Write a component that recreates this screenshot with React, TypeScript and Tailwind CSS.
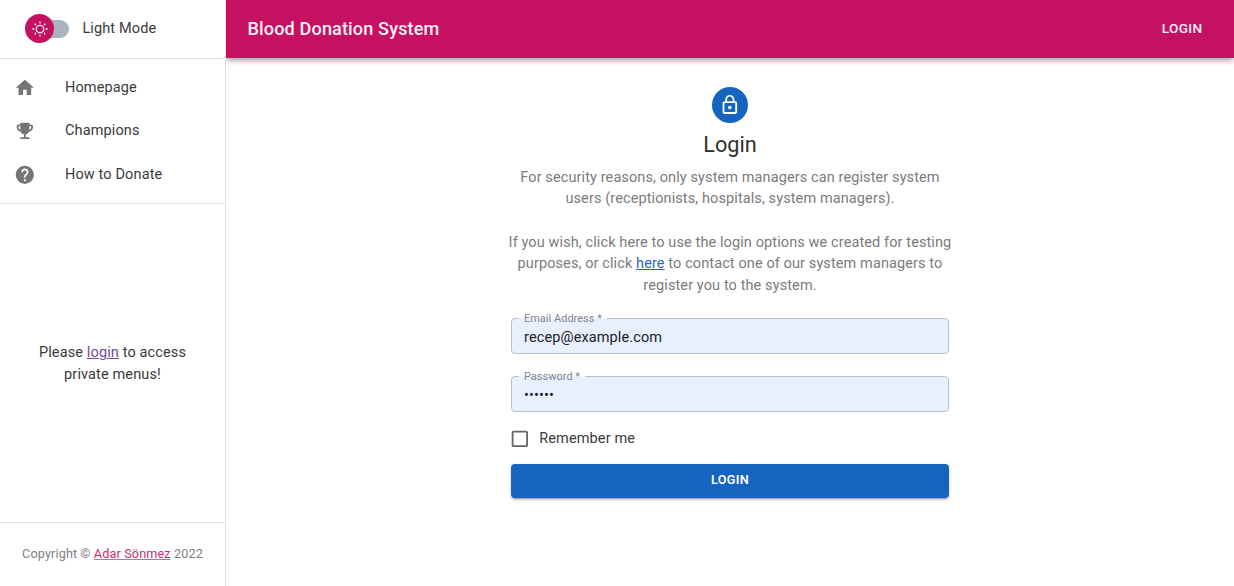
import type { ReactNode } from "react";

const HOME = "M10 20v-6h4v6h5v-8h3L12 3 2 12h3v8z";
const TROPHY =
  "M19 5h-2V3H7v2H5c-1.1 0-2 .9-2 2v1c0 2.55 1.92 4.63 4.39 4.94.63 1.5 1.98 2.63 3.61 2.96V19H7v2h10v-2h-4v-3.1c1.63-.33 2.98-1.46 3.61-2.96C19.08 12.63 21 10.55 21 8V7c0-1.1-.9-2-2-2zM5 8V7h2v3.82C5.84 10.4 5 9.3 5 8zm14 0c0 1.3-.84 2.4-2 2.82V7h2v1z";
const HELP =
  "M12 2C6.48 2 2 6.48 2 12s4.48 10 10 10 10-4.48 10-10S17.52 2 12 2zm1 17h-2v-2h2v2zm2.07-7.75l-.9.92C13.45 12.9 13 13.5 13 15h-2v-.5c0-1.1.45-2.1 1.17-2.83l1.24-1.26c.37-.36.59-.86.59-1.41 0-1.1-.9-2-2-2s-2 .9-2 2H8c0-2.21 1.79-4 4-4s4 1.79 4 4c0 .88-.36 1.68-.93 2.25z";
const LOCK =
  "M12 17c1.1 0 2-.9 2-2s-.9-2-2-2-2 .9-2 2 .9 2 2 2zm6-9h-1V6c0-2.76-2.24-5-5-5S7 3.24 7 6v2H6c-1.1 0-2 .9-2 2v10c0 1.1.9 2 2 2h12c1.1 0 2-.9 2-2V10c0-1.1-.9-2-2-2zM8.9 6c0-1.71 1.39-3.1 3.1-3.1s3.1 1.39 3.1 3.1v2H8.9V6zM18 20H6V10h12v10z";
const CHECKBOX =
  "M19 5v14H5V5h14m0-2H5c-1.1 0-2 .9-2 2v14c0 1.1.9 2 2 2h14c1.1 0 2-.9 2-2V5c0-1.1-.9-2-2-2z";
const SUN =
  "M9.305 1.667V3.75h1.389V1.667h-1.39zm-4.707 1.95l-.982.982L5.09 6.072l.982-.982-1.473-1.473zm10.802 0L13.927 5.09l.982.982 1.473-1.473-.982-.982zM10 5.139a4.872 4.872 0 00-4.862 4.86A4.872 4.872 0 0010 14.862 4.872 4.872 0 0014.86 10 4.872 4.872 0 0010 5.139zm0 1.389A3.462 3.462 0 0113.471 10a3.462 3.462 0 01-3.473 3.472A3.462 3.462 0 016.527 10 3.462 3.462 0 0110 6.528zM1.665 9.305v1.39h2.083v-1.39H1.666zm14.583 0v1.39h2.084v-1.39h-2.084zM5.09 13.928L3.616 15.4l.982.982 1.473-1.473-.982-.982zm9.82 0l-.982.982 1.473 1.473.982-.982-1.473-1.473zM9.305 16.25v2.083h1.389V16.25h-1.39z";

function Icon({ path, className }: { path: string; className: string }) {
  return (
    <svg viewBox="0 0 24 24" fill="currentColor" className={className}>
      <path d={path} />
    </svg>
  );
}

function NavItem({ path, children }: { path: string; children: ReactNode }) {
  return (
    <li className="flex h-[43.4px] items-center pl-[14.2px]">
      <Icon path={path} className="size-[21.7px] text-[#757575]" />
      <span className="ml-[29.1px]">{children}</span>
    </li>
  );
}

function Field({ label, type, value }: { label: string; type: string; value: string }) {
  return (
    <label className="relative block h-9 rounded-[4px] border border-[#b9c0cd] bg-[#e8effd]">
      <input
        type={type}
        defaultValue={value}
        className="block h-full w-full bg-transparent px-3 pt-[2px] text-[14.5px] tracking-[0.12px] text-[#202226] outline-none"
      />
      <span className="absolute -top-px left-[7px] h-px bg-[#f3f7fe] pr-[5px] pl-[5px] text-[10.9px] tracking-[0.06px] text-[#80848d]">
        <span className="relative -top-[6px] block leading-[14px]">{label}</span>
      </span>
    </label>
  );
}

export default function App() {
  return (
    <div className="flex h-[586px] w-[1234px] overflow-hidden bg-white font-[Roboto,sans-serif] text-[14.5px] leading-[21.7px] tracking-[0.13px] text-[#3a3a3a]">
      <aside className="relative z-10 flex w-[226px] shrink-0 flex-col border-r border-[#e0e0e0] bg-white">
        <div className="flex h-[59px] items-center border-b border-[#e0e0e0] pl-[25px]">
          <div className="relative h-[30px] w-11">
            <div className="absolute top-[6px] left-1 h-[18px] w-10 rounded-full bg-[#aab4be]" />
            <div className="absolute top-0 left-0 flex size-[29.2px] items-center justify-center rounded-full bg-[#c51162]">
              <svg viewBox="0 0 20 20" fill="white" className="size-[18px]">
                <path d={SUN} />
              </svg>
            </div>
          </div>
          <span className="ml-[13.4px]">Light Mode</span>
        </div>
        <ul className="h-[145px] border-b border-[#e0e0e0] pt-[7px]">
          <NavItem path={HOME}>Homepage</NavItem>
          <NavItem path={TROPHY}>Champions</NavItem>
          <NavItem path={HELP}>How to Donate</NavItem>
        </ul>
        <div className="flex flex-1 items-center justify-center pt-[2px] text-center">
          <p>
            Please <a className="text-[#74479f] underline">login</a> to access
            <br />
            private menus!
          </p>
        </div>
        <footer className="flex h-16 items-center justify-center border-t border-[#e0e0e0] pb-px text-[12.65px] text-[#808080]">
          <p>
            Copyright © <a className="text-[#c8306f] underline decoration-[#d7689a]">Adar Sönmez</a> 2022
          </p>
        </footer>
      </aside>
      <main className="flex flex-1 flex-col">
        <header className="flex h-[58px] shrink-0 items-center justify-between bg-[#c51162] pr-[31.5px] pl-[21.5px] text-[#ffeef5] shadow-[0_2px_4px_-1px_rgba(0,0,0,0.2),0_4px_5px_0_rgba(0,0,0,0.14),0_1px_9px_0_rgba(0,0,0,0.12)]">
          <h1 className="text-[18.1px] font-medium">Blood Donation System</h1>
          <button className="text-[13.6px] font-medium tracking-[0.36px]">LOGIN</button>
        </header>
        <section className="mx-auto mt-[29px] flex w-[438px] flex-col">
          <div className="flex size-9 items-center justify-center self-center rounded-full bg-[#1565c0] text-white">
            <Icon path={LOCK} className="size-[21.7px]" />
          </div>
          <h2 className="mt-[7px] text-center text-[21.7px] leading-[29px] tracking-normal text-[#303030]">Login</h2>
          <div className="-mx-2 mt-[7.6px] text-center tracking-[0.105px] text-[#7b7b7b]">
            <p>
              For security reasons, only system managers can register system
              <br />
              users (receptionists, hospitals, system managers).
            </p>
            <p className="mt-[21.7px]">
              If you wish, click here to use the login options we created for testing
              <br />
              purposes, or click <a className="text-[#2f66bd] underline">here</a> to contact one of our system managers to
              <br />
              register you to the system.
            </p>
          </div>
          <form className="mt-[21.4px] flex flex-col">
            <Field label="Email Address *" type="text" value="recep@example.com" />
            <div className="mt-[22px]">
              <Field label="Password *" type="password" value="123456" />
            </div>
            <label className="mt-[15.6px] -ml-[1.8px] flex h-[22px] items-center">
              <Icon path={CHECKBOX} className="size-[21.7px] text-[#666]" />
              <span className="ml-[8.3px]">Remember me</span>
            </label>
            <button
              type="button"
              className="mt-[14.4px] h-[34px] rounded-[4px] bg-[#1565c0] pb-[2px] text-[12.65px] font-semibold tracking-[0.3px] text-white shadow-[0_3px_1px_-2px_rgba(0,0,0,0.2),0_2px_2px_0_rgba(0,0,0,0.14),0_1px_5px_0_rgba(0,0,0,0.12)]"
            >
              LOGIN
            </button>
          </form>
        </section>
      </main>
    </div>
  );
}
